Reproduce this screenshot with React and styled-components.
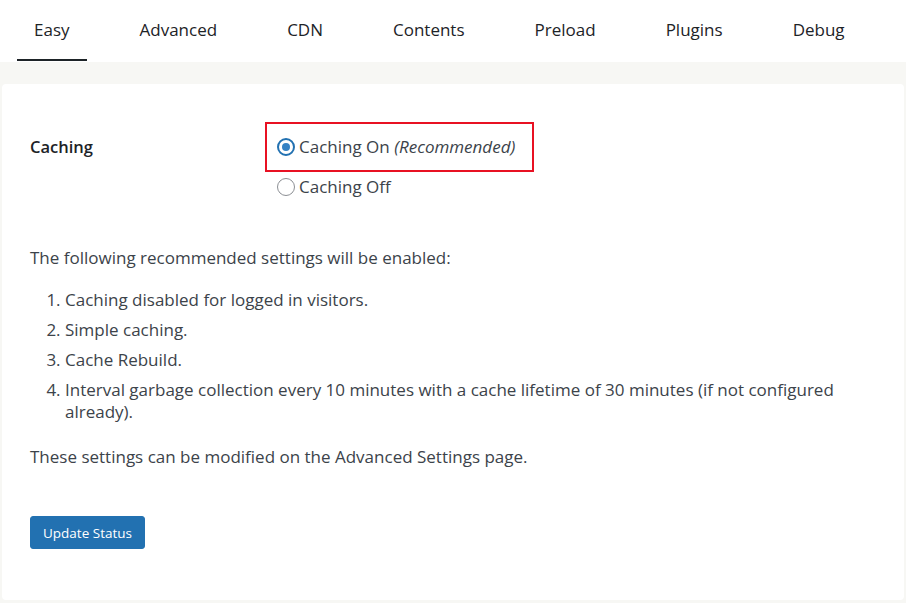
import React from "react";
import styled, { createGlobalStyle } from "styled-components";

const Global = createGlobalStyle`
  html, body { margin: 0; padding: 0; background: #f7f7f4; }
  body { font-family: "Open Sans", "Noto Sans", sans-serif; color: #3c434a; }
`;

const Page = styled.div`
  width: 906px;
  height: 603px;
  display: flex;
  flex-direction: column;
  background: #f7f7f4;
`;

const TabBar = styled.nav`
  display: flex;
  gap: 36px;
  padding-left: 17px;
  height: 62px;
  background: #ffffff;
  box-sizing: border-box;
`;

const Tab = styled.div`
  padding: 0 17px;
  height: 61px;
  display: flex;
  align-items: center;
  box-sizing: border-box;
  padding-bottom: 1px;
  font-size: 17px;
  color: #1d2327;
  border-bottom: 2px solid ${(p) => (p.$active ? "#1d2327" : "transparent")};
`;

const Card = styled.section`
  margin: 22px 2px 3px 2px;
  flex: 1;
  background: #ffffff;
  border-radius: 4px;
  padding: 38px 28px 0 28px;
  box-sizing: border-box;
`;

const Row = styled.div`
  display: flex;
`;

const Label = styled.div`
  width: 247px;
  padding-top: 13px;
  font-size: 16.5px;
  font-weight: 600;
  color: #1d2327;
`;

const Options = styled.div`
  display: flex;
  flex-direction: column;
  gap: 4px;
  margin-left: -12px;
`;

const Highlight = styled.div`
  border: 2px solid #e81123;
  padding: 12px 10px 12px 10px;
  width: 245px;
`;

const Option = styled.label`
  display: flex;
  align-items: center;
  gap: 4px;
  font-size: 17px;
  line-height: 22px;
  color: #3c434a;
  padding-left: ${(p) => (p.$plain ? "12px" : "0")};
`;

const Radio = styled.span`
  width: 18px;
  height: 18px;
  box-sizing: border-box;
  border-radius: 50%;
  border: ${(p) => (p.$checked ? "2px solid #2271b1" : "1px solid #8c8f94")};
  display: flex;
  align-items: center;
  justify-content: center;
  &::after {
    content: "";
    width: 8px;
    height: 8px;
    border-radius: 50%;
    background: ${(p) => (p.$checked ? "#3582c4" : "transparent")};
  }
`;

const Text = styled.p`
  margin: ${(p) => p.$m || "0"};
  font-size: 17px;
  line-height: 22px;
`;

const List = styled.ol`
  margin: 20px 0 0 0;
  padding-left: 35px;
  font-size: 17px;
  line-height: 22px;
  li { margin-bottom: 8px; }
`;

const Button = styled.button`
  margin-top: 48px;
  height: 33px;
  padding: 0 12px;
  background: #2271b1;
  color: #ffffff;
  border: 1px solid #2271b1;
  border-radius: 3px;
  font-family: "Open Sans", "Noto Sans", sans-serif;
  font-size: 13.5px;
`;

const tabs = ["Easy", "Advanced", "CDN", "Contents", "Preload", "Plugins", "Debug"];

export default function App() {
  return (
    <Page>
      <Global />
      <TabBar>
        {tabs.map((t, i) => (
          <Tab key={t} $active={i === 0}>{t}</Tab>
        ))}
      </TabBar>
      <Card>
        <Row>
          <Label>Caching</Label>
          <Options>
            <Highlight>
              <Option>
                <Radio $checked />
                <span>Caching On <em>(Recommended)</em></span>
              </Option>
            </Highlight>
            <Option $plain>
              <Radio />
              <span>Caching Off</span>
            </Option>
          </Options>
        </Row>
        <Text $m="49px 0 0 0">The following recommended settings will be enabled:</Text>
        <List>
          <li>Caching disabled for logged in visitors.</li>
          <li>Simple caching.</li>
          <li>Cache Rebuild.</li>
          <li>Interval garbage collection every 10 minutes with a cache lifetime of 30 minutes (if not configured already).</li>
        </List>
        <Text $m="23px 0 0 0">These settings can be modified on the Advanced Settings page.</Text>
        <Button>Update Status</Button>
      </Card>
    </Page>
  );
}
